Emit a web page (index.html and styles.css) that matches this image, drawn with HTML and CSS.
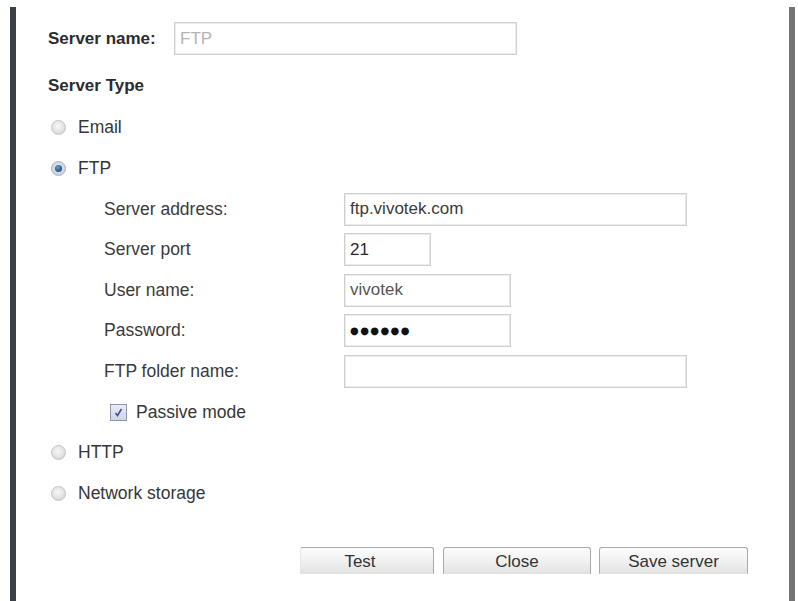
FILE: index.html
```html
<!DOCTYPE html>
<html>
<head>
<meta charset="utf-8">
<link rel="stylesheet" href="styles.css">
</head>
<body>
<div class="frame">
  <div class="name-row">
    <span class="bold-label">Server name:</span>
    <div class="field field-name placeholder">FTP</div>
  </div>
  <div class="section-title">Server Type</div>
  <div class="options">
    <div class="row"><span class="radio"></span><span class="opt">Email</span></div>
    <div class="row"><span class="radio checked"><span class="dot"></span></span><span class="opt">FTP</span></div>
    <div class="row sub"><span class="sub-label">Server address:</span><div class="field field-wide">ftp.vivotek.com</div></div>
    <div class="row sub"><span class="sub-label">Server port</span><div class="field field-port dark">21</div></div>
    <div class="row sub"><span class="sub-label">User name:</span><div class="field field-mid grey">vivotek</div></div>
    <div class="row sub"><span class="sub-label">Password:</span><div class="field field-mid"><span class="dots">●●●●●●</span></div></div>
    <div class="row sub"><span class="sub-label">FTP folder name:</span><div class="field field-wide"></div></div>
    <div class="row check-row">
      <span class="checkbox"><svg width="11" height="11" viewBox="0 0 11 11"><path d="M2.5 6 L4.5 8.5 L8.5 2" fill="none" stroke="#4a4f9a" stroke-width="1.6"/></svg></span>
      <span class="opt">Passive mode</span>
    </div>
    <div class="row"><span class="radio"></span><span class="opt">HTTP</span></div>
    <div class="row"><span class="radio"></span><span class="opt">Network storage</span></div>
  </div>
  <div class="buttons">
    <button class="btn btn-test">Test</button>
    <button class="btn btn-close">Close</button>
    <button class="btn btn-save">Save server</button>
  </div>
</div>
</body>
</html>
```
FILE: styles.css
```css
html, body {
  margin: 0;
  padding: 0;
  background: #ffffff;
}
body {
  font-family: "Liberation Sans", Arial, sans-serif;
  color: #383838;
}
.frame {
  box-sizing: border-box;
  margin: 7px 0 0 10px;
  width: 785px;
  height: 594px;
  border-left: 6px solid #3b4047;
  border-right: 6px solid #747474;
  padding: 15px 0 0 32px;
}
.name-row {
  display: flex;
  align-items: center;
  height: 33px;
}
.bold-label {
  font-weight: bold;
  font-size: 17px;
  color: #2c2c2c;
  width: 126px;
}
.section-title {
  font-weight: bold;
  font-size: 17px;
  color: #2c2c2c;
  height: 20px;
  line-height: 20px;
  margin-top: 21px;
}
.options {
  margin-top: 11.7px;
  display: flex;
  flex-direction: column;
}
.row {
  height: 40.6px;
  display: flex;
  align-items: center;
  font-size: 17.5px;
}
.opt {
  color: #363636;
}
.radio {
  box-sizing: border-box;
  width: 15px;
  height: 15px;
  border-radius: 50%;
  margin: 0 12px 0 3px;
  background: radial-gradient(circle at 45% 40%, #f7f7f7 0%, #e2e2e2 55%, #c9c9c9 100%);
  border: 1px solid #c4c4c4;
  display: flex;
  align-items: center;
  justify-content: center;
}
.radio.checked {
  background: radial-gradient(circle at 50% 45%, #e8eef5 0%, #c9d4e0 70%, #aab6c4 100%);
  border-color: #a7b2c0;
}
.dot {
  width: 7px;
  height: 7px;
  border-radius: 50%;
  background: radial-gradient(circle at 40% 35%, #6f9ccc 0%, #2c5a8c 60%, #1d3f68 100%);
}
.sub {
  padding-left: 56px;
}
.sub-label {
  width: 240px;
  color: #3a3a3a;
}
.field {
  box-sizing: border-box;
  height: 33px;
  border: 1px solid #cfcfcf;
  box-shadow: inset 0 0 0 1px #ececec;
  padding: 0 5px;
  display: flex;
  align-items: center;
  font-size: 17px;
  color: #3a3a3a;
  background: #fff;
}
.field-name {
  width: 343px;
}
.placeholder {
  color: #b4b4b4;
}
.field-wide {
  width: 343px;
}
.field-port {
  width: 87px;
}
.field-mid {
  width: 167px;
}
.dark {
  color: #2a2a2a;
}
.grey {
  color: #555;
}
.dots {
  font-family: "DejaVu Sans", sans-serif;
  font-size: 10px;
  letter-spacing: 1.4px;
  color: #111;
}
.check-row {
  padding-left: 62px;
}
.checkbox {
  box-sizing: border-box;
  width: 17px;
  height: 17px;
  border: 1px solid #8e97ab;
  background: linear-gradient(#e9ecf5, #cfd5e6);
  display: flex;
  align-items: center;
  justify-content: center;
  margin-right: 9px;
}
.buttons {
  display: flex;
  margin-top: 33.3px;
  margin-left: 252px;
}
.btn {
  box-sizing: border-box;
  height: 27px;
  font-family: "Liberation Sans", Arial, sans-serif;
  font-size: 17px;
  color: #333;
  background: linear-gradient(#fdfdfd 0%, #f1f1f1 50%, #e3e3e3 100%);
  border: 1px solid #a9a9a9;
  border-bottom-color: #e2e2e2;
  border-radius: 3px 3px 0 0;
  padding: 3px 0 0 0;
  margin-right: 8px;
}
.btn-test { width: 134px; margin-right: 9px; padding-right: 14px; border-left-color: #e6e6e6; }
.btn-close { width: 148px; }
.btn-save { width: 149px; }
```
